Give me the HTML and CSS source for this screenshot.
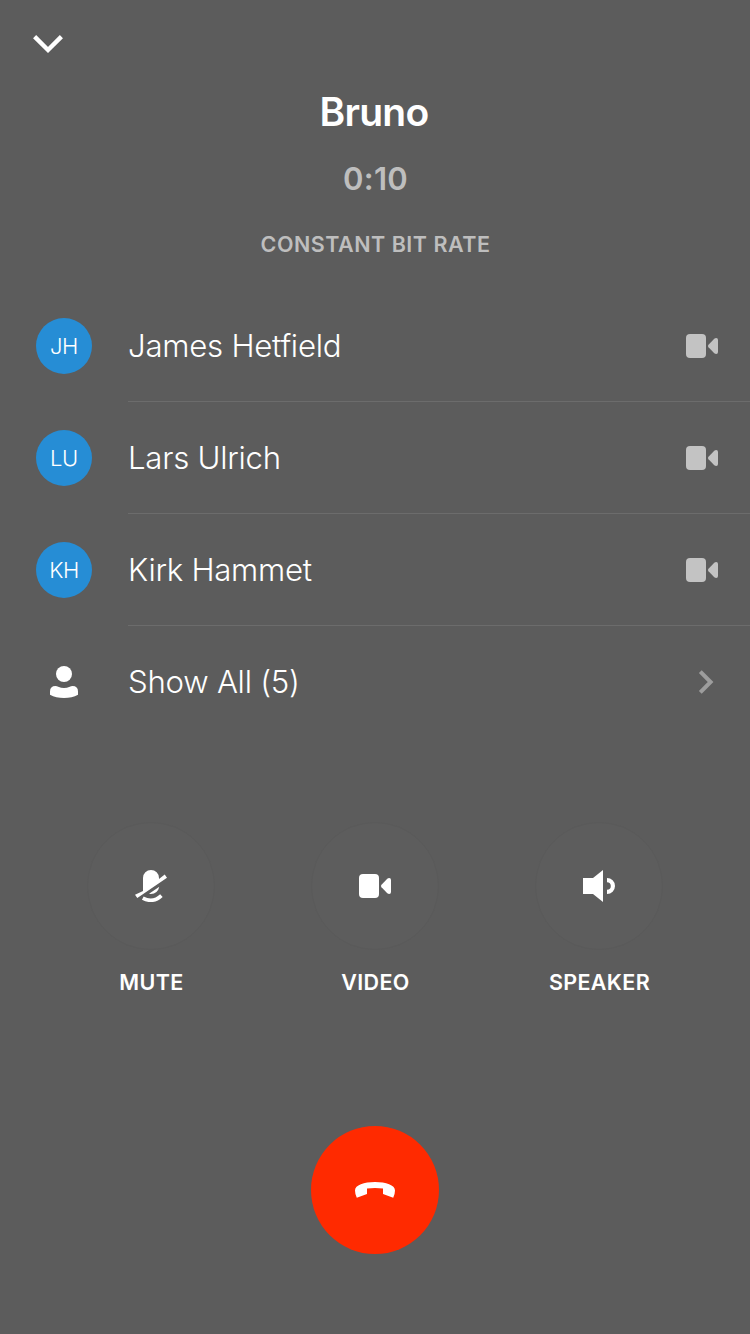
FILE: index.html
```html
<!DOCTYPE html>
<html lang="en">
<head>
<meta charset="utf-8">
<title>Call</title>
<link rel="stylesheet" href="styles.css">
</head>
<body>
<svg width="0" height="0" class="defs">
  <symbol id="camera" viewBox="0 0 32 32"><rect y="4" width="20" height="24" rx="4"/><path d="M22.5 14.7 28.3 8.8Q29.2 8 30.2 8Q32 8 32 10V22Q32 24 30.2 24Q29.2 24 28.3 23.2L22.5 17.3Q21.3 16 22.5 14.7Z"/></symbol>
</svg>
<main class="screen">
  <nav class="topbar"><svg class="collapse" viewBox="0 0 32 20"><path d="M2.6 2.6 16 16 29.4 2.6"/></svg></nav>
  <header class="header">
    <h1 class="title">Bruno</h1>
    <div class="time">0:10</div>
    <div class="bitrate">CONSTANT BIT RATE</div>
  </header>
  <ul class="people">
    <li class="row"><span class="avatar">JH</span><div class="cell"><span class="name">James Hetfield</span><svg class="icon cam"><use href="#camera"/></svg></div></li>
    <li class="row"><span class="avatar">LU</span><div class="cell"><span class="name">Lars Ulrich</span><svg class="icon cam"><use href="#camera"/></svg></div></li>
    <li class="row"><span class="avatar">KH</span><div class="cell"><span class="name">Kirk Hammet</span><svg class="icon cam"><use href="#camera"/></svg></div></li>
    <li class="row"><span class="avatar plain"><svg class="icon" viewBox="0 0 32 32"><circle cx="16" cy="8" r="8"/><path d="M2 25.5Q2 20 7.5 20Q9 20 10.2 20.7Q16 23.3 21.8 20.7Q23 20 24.5 20Q30 20 30 25.5V28.8Q24 32 16 32T2 28.8Z"/></svg></span><div class="cell last"><span class="name">Show All (5)</span><svg class="more" viewBox="0 0 16 24"><path d="M2.3 1.6 12.6 12 2.3 22.4"/></svg></div></li>
  </ul>
  <section class="controls">
    <div class="control"><span class="disc"><svg class="icon" viewBox="0 0 32 32"><path d="M8 21V8a8 8 0 0 1 16 0V9L29.7 4.5 32 7.7 2.3 28 0 24.7Z"/><path d="M14 23.8 24.3 16.8Q22.5 24.8 14 23.8Z"/><path class="arc" d="M7.8 28.2Q18 33.5 26.4 25.6"/></svg></span><span class="label">MUTE</span></div>
    <div class="control"><span class="disc"><svg class="icon"><use href="#camera"/></svg></span><span class="label">VIDEO</span></div>
    <div class="control"><span class="disc"><svg class="icon" viewBox="0 0 32 32"><path d="M0 8H10L20 0V32L10 24H0ZM24 8a8 8 0 0 1 0 16v-4.2a3.8 3.8 0 0 0 0-7.6Z"/></svg></span><span class="label">SPEAKER</span></div>
  </section>
  <div class="hangup"><svg class="phone" viewBox="0 0 40 16"><path d="M0 8.5C0 3 9 0 20 0S40 3 40 8.5Q40 12 38.2 15.8L28 12V6.6Q20 5.2 12 6.6V12L1.8 15.8Q0 12 0 8.5Z"/></svg></div>
</main>
</body>
</html>
```
FILE: styles.css
```css
* { box-sizing: border-box; margin: 0; padding: 0; }
body { background: #5c5c5c; color: #fff; font-family: Inter, "Liberation Sans", sans-serif; }
.defs { display: block; }
.screen { width: 750px; height: 1334px; display: flex; flex-direction: column; overflow: hidden; }
svg { display: block; flex: none; fill: #fff; }
.topbar { height: 88px; padding: 34px 32px; }
.collapse { width: 32px; height: 20px; fill: none; stroke: #fff; stroke-width: 4.4; }
.header { height: 202px; display: flex; flex-direction: column; align-items: center; white-space: nowrap; }
.title { padding-right: 2px; font-size: 39px; line-height: 48px; font-weight: 600; letter-spacing: -0.75px; }
.time { margin-top: 23px; padding-left: 1px; font-size: 31px; line-height: 40px; font-weight: 600; letter-spacing: 0.3px; color: #bebebe; }
.bitrate { margin-top: 31px; padding-left: 1px; font-size: 21.5px; line-height: 28px; font-weight: 600; letter-spacing: 0.5px; color: #bebebe; }
.people { list-style: none; }
.row { height: 112px; display: flex; align-items: center; padding-left: 36px; }
.avatar { width: 56px; height: 56px; margin-right: 36px; border-radius: 50%; background: #268dd5; display: flex; align-items: center; justify-content: center; font-size: 22px; font-weight: 300; letter-spacing: -0.4px; }
.plain { background: none; }
.cell { flex: 1; height: 112px; display: flex; align-items: center; justify-content: space-between; padding: 1px 32px 0 0; border-bottom: 1px solid #6c6c6c; }
.last { border-bottom: 0; padding-bottom: 1px; }
.name { padding-bottom: 1px; font-size: 31.2px; line-height: 40px; font-weight: 300; letter-spacing: -0.26px; white-space: nowrap; }
.icon { width: 32px; height: 32px; }
.cam { fill: #c3c3c3; }
.more { width: 16px; height: 24px; margin-right: 4px; fill: none; stroke: #9d9d9d; stroke-width: 4; }
.controls { display: flex; justify-content: space-between; padding: 84px 87px 0; }
.control { width: 128px; display: flex; flex-direction: column; align-items: center; }
.disc { width: 128px; height: 128px; border-radius: 50%; background: #5d5d5d; border: 1px solid #5a5a5a; display: flex; align-items: center; justify-content: center; }
.arc { fill: none; stroke: #fff; stroke-width: 3.6; }
.label { margin-top: 18px; padding-left: 1px; font-size: 21.5px; line-height: 28px; font-weight: 600; letter-spacing: 0.35px; white-space: nowrap; }
.hangup { width: 128px; height: 128px; margin: 130px auto 0; border-radius: 50%; background: #ff2a00; display: flex; align-items: center; justify-content: center; }
.phone { width: 40px; height: 16px; }
```
